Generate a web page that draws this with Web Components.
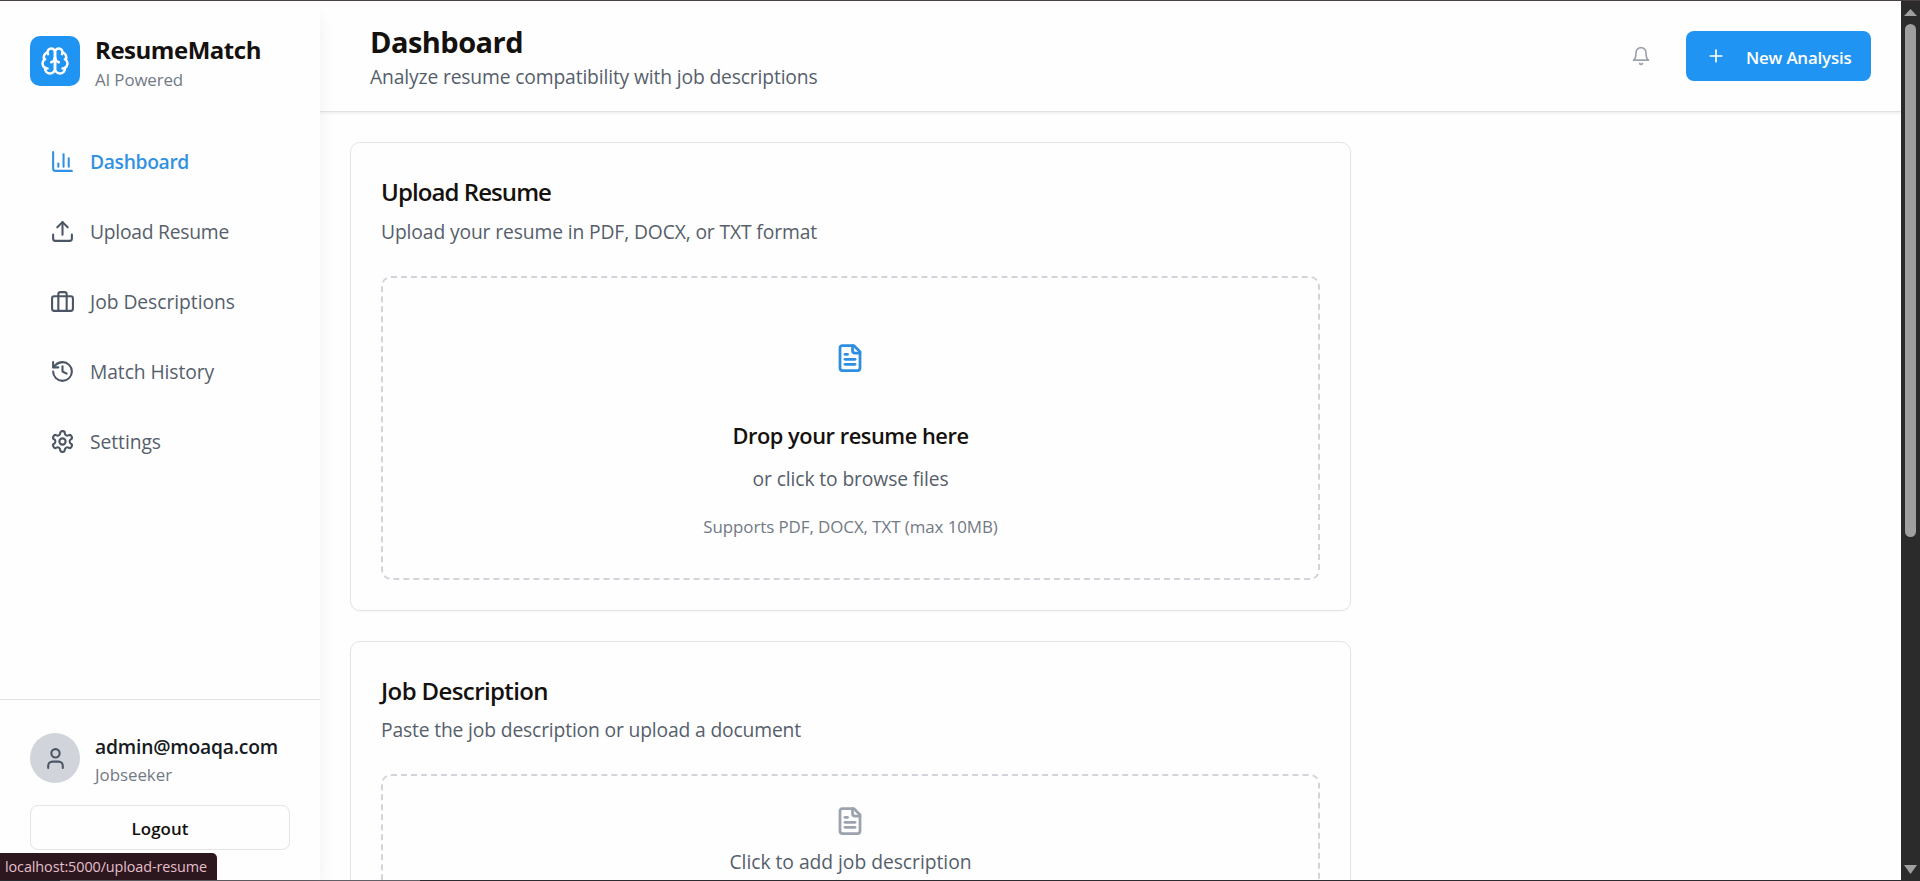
<!DOCTYPE html>
<html lang="en">
<head>
<meta charset="utf-8">
<title>ResumeMatch</title>
<style>
html,body{margin:0;height:881px;overflow:hidden;background:#fefefe}
body{font-family:"Open Sans","Noto Sans",sans-serif;color:#14110f}
</style>
</head>
<body>
<app-shell></app-shell>
<script>
const define = (name, html, setup) => customElements.define(name, class extends HTMLElement {
  constructor() {
    super();
    const t = document.createElement('template');
    t.innerHTML = html;
    this.attachShadow({ mode: 'open' }).append(t.content.cloneNode(true));
  }
  connectedCallback() { if (setup) setup(this, this.shadowRoot); }
});

const ICONS = {
  brain: '<path d="M12 5a3 3 0 1 0-5.997.125 4 4 0 0 0-2.526 5.77 4 4 0 0 0 .556 6.588A4 4 0 1 0 12 18Z"/><path d="M12 5a3 3 0 1 1 5.997.125 4 4 0 0 1 2.526 5.77 4 4 0 0 1-.556 6.588A4 4 0 1 1 12 18Z"/><path d="M15 13a4.5 4.5 0 0 1-3-4 4.5 4.5 0 0 1-3 4"/><path d="M17.599 6.5a3 3 0 0 0 .399-1.375"/><path d="M6.003 5.125A3 3 0 0 0 6.401 6.5"/><path d="M3.477 10.896a4 4 0 0 1 .585-.396"/><path d="M19.938 10.5a4 4 0 0 1 .585.396"/><path d="M6 18a4 4 0 0 1-1.967-.516"/><path d="M19.967 17.484A4 4 0 0 1 18 18"/>',
  chart: '<path d="M3 3v16a2 2 0 0 0 2 2h16"/><path d="M18 17V9"/><path d="M13 17V5"/><path d="M8 17v-3"/>',
  upload: '<path d="M21 15v4a2 2 0 0 1-2 2H5a2 2 0 0 1-2-2v-4"/><path d="m17 8-5-5-5 5"/><path d="M12 3v12"/>',
  briefcase: '<rect x="2" y="7" width="20" height="14" rx="2"/><path d="M16 21V5a2 2 0 0 0-2-2h-4a2 2 0 0 0-2 2v16"/>',
  history: '<path d="M3 12a9 9 0 1 0 9-9 9.75 9.75 0 0 0-6.74 2.74L3 8"/><path d="M3 3v5h5"/><path d="M12 7v5l4 2"/>',
  settings: '<path d="M12.22 2h-.44a2 2 0 0 0-2 2v.18a2 2 0 0 1-1 1.73l-.43.25a2 2 0 0 1-2 0l-.15-.08a2 2 0 0 0-2.73.73l-.22.38a2 2 0 0 0 .73 2.73l.15.1a2 2 0 0 1 1 1.72v.51a2 2 0 0 1-1 1.74l-.15.09a2 2 0 0 0-.73 2.73l.22.38a2 2 0 0 0 2.73.73l.15-.08a2 2 0 0 1 2 0l.43.25a2 2 0 0 1 1 1.73V20a2 2 0 0 0 2 2h.44a2 2 0 0 0 2-2v-.18a2 2 0 0 1 1-1.73l.43-.25a2 2 0 0 1 2 0l.15.08a2 2 0 0 0 2.73-.73l.22-.39a2 2 0 0 0-.73-2.73l-.15-.08a2 2 0 0 1-1-1.74v-.5a2 2 0 0 1 1-1.74l.15-.09a2 2 0 0 0 .73-2.73l-.22-.38a2 2 0 0 0-2.73-.73l-.15.08a2 2 0 0 1-2 0l-.43-.25a2 2 0 0 1-1-1.73V4a2 2 0 0 0-2-2z"/><circle cx="12" cy="12" r="3"/>',
  user: '<path d="M19 21v-2a4 4 0 0 0-4-4H9a4 4 0 0 0-4 4v2"/><circle cx="12" cy="7" r="4"/>',
  bell: '<path d="M6 8a6 6 0 0 1 12 0c0 7 3 9 3 9H3s3-2 3-9"/><path d="M10.3 21a1.94 1.94 0 0 0 3.4 0"/>',
  plus: '<path d="M5 12h14"/><path d="M12 5v14"/>',
  file: '<path d="M15 2H6a2 2 0 0 0-2 2v16a2 2 0 0 0 2 2h12a2 2 0 0 0 2-2V7Z"/><path d="M14 2v4a2 2 0 0 0 2 2h4"/><path d="M10 9H8"/><path d="M16 13H8"/><path d="M16 17H8"/>'
};

define('ui-icon', '<style>:host{display:block;flex:none}svg{display:block;fill:none;stroke:currentColor;stroke-linecap:round;stroke-linejoin:round}</style><span></span>', (el, root) => {
  const s = el.getAttribute('size') || 25;
  root.querySelector('span').innerHTML = `<svg width="${s}" height="${s}" viewBox="0 0 24 24" stroke-width="${el.getAttribute('stroke') || 2}">${ICONS[el.getAttribute('name')]}</svg>`;
});

/* One line of text, tracked so that it fills the width given in "w". */
define('ui-text', `<style>
:host{display:block;white-space:nowrap;line-height:30px;font-size:19.3px;color:#565f6b;padding-top:1px;margin-bottom:-1px}
:host([kind=small]){font-size:16.9px;line-height:25px;color:#727985}
:host([kind=strong]){font-weight:600;color:#161a22}
:host([kind=brand]){font-size:24px;line-height:35px;font-weight:700;color:#14110f}
:host([kind=page]){font-size:29px;line-height:40px;font-weight:700;color:#14110f}
:host([kind=title]){font-size:24px;line-height:36px;font-weight:600;color:#14110f}
:host([kind=drop]){font-size:21.8px;line-height:35px;font-weight:600;color:#14110f;padding-top:0;margin-bottom:0}
:host([kind=button]){font-size:16.9px;line-height:25px;font-weight:600;color:inherit}
:host([kind=status]){font-size:14.4px;line-height:26px;color:#e3bfc9}
:host([kind=active]){font-weight:600;color:#3391e2}
span{display:inline-block}
</style><span><slot></slot></span>`, (el, root) => {
  const span = root.querySelector('span'), w = +el.getAttribute('w');
  const n = el.textContent.length;
  if (w && n) span.style.letterSpacing = ((w - span.getBoundingClientRect().width) / n).toFixed(3) + 'px';
});

define('nav-item', `<style>
:host{display:flex;align-items:center;gap:15px;height:70px;padding-left:50px;color:#4b5563}
:host([active]){color:#3391e2}
</style><ui-icon></ui-icon><slot></slot>`, (el, root) => {
  const old = root.querySelector('ui-icon'), icon = document.createElement('ui-icon');
  icon.setAttribute('name', el.getAttribute('icon'));
  old.replaceWith(icon);
});

define('side-bar', `<style>
:host{display:flex;flex-direction:column;width:320px;height:879px;flex:none;background:#fefefe;box-shadow:0 12px 18px -4px rgba(0,0,0,.09);z-index:2;box-sizing:border-box}
.brand{display:flex;align-items:center;gap:15px;padding:30px 0 0 30px;height:60px}
.logo{width:50px;height:50px;border-radius:10px;background:#2094f3;color:#fff;display:grid;place-items:center}
nav{margin-top:35px;flex:1}
.foot{border-top:1px solid #e1e2e5;padding:28px 30px 0;height:152px}
.user{display:flex;align-items:center;gap:15px;height:60px}
.avatar{width:50px;height:50px;border-radius:50%;background:#d1d5db;color:#4b5563;display:grid;place-items:center}
.logout{margin-top:17px;height:45px;box-sizing:border-box;border:1px solid #e4e4e7;border-radius:8px;display:grid;place-items:center;color:#14110f;background:#fefefe}
</style>
<div class="brand"><div class="logo"><ui-icon name="brain" size="30"></ui-icon></div><div><ui-text kind="brand" w="166">ResumeMatch</ui-text><ui-text kind="small" w="88">AI Powered</ui-text></div></div>
<nav>
<nav-item icon="chart" active><ui-text kind="active" w="99">Dashboard</ui-text></nav-item>
<nav-item icon="upload"><ui-text w="139">Upload Resume</ui-text></nav-item>
<nav-item icon="briefcase"><ui-text w="145">Job Descriptions</ui-text></nav-item>
<nav-item icon="history"><ui-text w="124">Match History</ui-text></nav-item>
<nav-item icon="settings"><ui-text w="71">Settings</ui-text></nav-item>
</nav>
<div class="foot"><div class="user"><div class="avatar"><ui-icon name="user"></ui-icon></div><div><ui-text kind="strong" w="183">admin@moaqa.com</ui-text><ui-text kind="small" w="77">Jobseeker</ui-text></div></div>
<div class="logout"><ui-text kind="button" w="57">Logout</ui-text></div></div>`);

define('page-header', `<style>
:host{display:flex;align-items:center;justify-content:space-between;box-sizing:border-box;height:111px;padding:0 30px 0 50px;border-bottom:1px solid #e1e2e5;box-shadow:0 1px 3px rgba(0,0,0,.08);background:#fefefe}
.actions{display:flex;align-items:center;gap:35px;color:#9ca3af}
.new{width:185px;height:50px;border-radius:8px;background:#2094f3;color:#fff;display:flex;align-items:center;gap:20px;padding-left:20px;box-sizing:border-box}
</style>
<div><ui-text kind="page" w="153">Dashboard</ui-text><ui-text w="447.5">Analyze resume compatibility with job descriptions</ui-text></div>
<div class="actions"><ui-icon name="bell" size="20"></ui-icon><div class="new"><ui-icon name="plus" size="20"></ui-icon><ui-text kind="button" w="105.5">New Analysis</ui-text></div></div>`);

define('content-card', `<style>
:host{display:flex;flex-direction:column;width:1001px;box-sizing:border-box;border:1px solid #e4e4e7;border-radius:10px;padding:30px;box-shadow:0 1px 2px rgba(0,0,0,.03);background:#fefefe;flex:none}
.desc{margin:7px 0 30px}
:host([tight]) .desc{margin:6px 0 30px}
</style><slot name="title"></slot><div class="desc"><slot name="desc"></slot></div><slot></slot>`);

define('drop-zone', `<style>
:host{display:flex;flex-direction:column;align-items:center;box-sizing:border-box;border:2px dashed #d1d5db;border-radius:10px}
</style><slot></slot>`);

define('status-tip', `<style>
:host{position:absolute;left:0;bottom:1px;width:217px;height:27px;background:#2d171f;border-top-right-radius:5px;padding-left:5px;box-sizing:border-box;z-index:5}
</style><ui-text kind="status" w="202">localhost:5000/upload-resume</ui-text>`);

define('scroll-rail', `<style>
:host{display:flex;flex-direction:column;align-items:center;width:19px;height:880px;flex:none;background:#2b2b2b;color:#9f9f9f;z-index:3}
svg{display:block;fill:currentColor}
.thumb{width:11px;height:513px;border-radius:6px;background:#9f9f9f;margin-top:8px}
.gap{flex:1}
</style><svg width="13" height="7" style="margin-top:8px"><path d="M6.5 0L13 7H0Z"/></svg><div class="thumb"></div><div class="gap"></div><svg width="13" height="9" style="margin-bottom:7px"><path d="M0 0H13L6.5 9Z"/></svg>`);

define('app-shell', `<style>
:host{display:flex;position:relative;width:1920px;height:881px;box-sizing:border-box;border-top:1px solid #4a4145;overflow:hidden}
main{flex:1;height:879px;overflow:hidden}
.list{display:flex;flex-direction:column;gap:30px;padding:30px}
.one{height:304px;padding-top:65px}
.one .drop{margin-top:45px}
.one .or{margin-top:10px}
.one .sup{margin-top:20px}
.two{height:240px;padding-top:30px}
.two .click{margin-top:10px}
.blue,.grey{margin-right:1px}
.blue{color:#2e8fe2}.grey{color:#9ca3af}
.edge{position:absolute;left:0;right:19px;bottom:0;height:1px;background:linear-gradient(90deg,#2b2b30 0 60px,#626066 60px 420px,#2b2b30 420px 1104px,#2b2b30 1104px)}
</style>
<side-bar></side-bar>
<main><page-header></page-header>
<div class="list">
<content-card><ui-text slot="title" kind="title" w="170">Upload Resume</ui-text><ui-text slot="desc" w="436">Upload your resume in PDF, DOCX, or TXT format</ui-text>
<drop-zone class="one"><ui-icon class="blue" name="file" size="30" stroke="2.2"></ui-icon><ui-text class="drop" kind="drop" w="236">Drop your resume here</ui-text><ui-text class="or" w="196">or click to browse files</ui-text><ui-text class="sup" kind="small" w="294.5">Supports PDF, DOCX, TXT (max 10MB)</ui-text></drop-zone></content-card>
<content-card tight><ui-text slot="title" kind="title" w="167">Job Description</ui-text><ui-text slot="desc" w="420">Paste the job description or upload a document</ui-text>
<drop-zone class="two"><ui-icon class="grey" name="file" size="30" stroke="2.2"></ui-icon><ui-text class="click" w="242">Click to add job description</ui-text></drop-zone></content-card>
</div></main>
<scroll-rail></scroll-rail>
<div class="edge"></div>
<status-tip></status-tip>`);
</script>
</body>
</html>
